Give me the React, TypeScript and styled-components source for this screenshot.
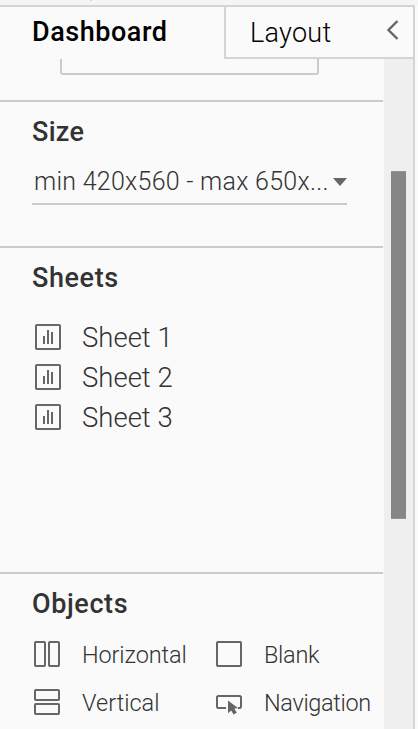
import React from "react";
import styled, { createGlobalStyle } from "styled-components";

const ink = "#333";
const iconGray = "#666";
const rule = "#cbcbcb";
const frame = "#d4d4d4";

const GlobalStyle = createGlobalStyle`
  *, *::before, *::after { box-sizing: border-box; }
  body {
    margin: 0;
    overflow: hidden;
    background: #fafafa;
    color: ${ink};
    font-family: Roboto, "Open Sans", sans-serif;
    font-weight: 300;
  }
  svg { display: block; flex: none; }
`;

const Page = styled.div`
  width: 418px;
  height: 729px;
  display: flex;
  flex-direction: column;
  overflow: hidden;
`;

const TopStrip = styled.div`
  flex: none;
  height: 5px;
  padding-left: 90px;
  background: #f5f5f5;

  &::before {
    content: "";
    display: block;
    width: 2px;
    height: 1px;
    background: #d8d8d8;
  }
`;

const Pane = styled.section`
  flex: 1;
  min-height: 0;
  width: 415px;
  display: flex;
  flex-direction: column;
  border-top: 2px solid ${frame};
  border-right: 2px solid ${frame};
`;

const TabBar = styled.nav`
  flex: none;
  display: flex;
  height: 52px;
  color: #000;
  font-size: 27px;
  line-height: 32px;
  white-space: nowrap;
`;

const ActiveTab = styled.div`
  width: 224px;
  padding: 9px 0 0 32px;
  font-weight: 500;
  letter-spacing: 0.55px;
`;

const InactiveTab = styled.div`
  flex: 1;
  display: flex;
  justify-content: space-between;
  padding: 10px 13px 0 24px;
  border-left: 2px solid ${frame};
  border-bottom: 2px solid ${frame};
  letter-spacing: 0.25px;

  svg { margin-top: 3px; }
`;

const Body = styled.div`
  flex: 1;
  min-height: 0;
  display: flex;
`;

const Content = styled.main`
  width: 383px;
  overflow: hidden;
`;

const ScrollTrack = styled.div`
  flex: 1;
  margin-left: 1px;
  padding: 112px 0 0 7px;
  background: #efefef;
`;

const ScrollThumb = styled.div`
  width: 15px;
  height: 348px;
  border: solid #959595;
  border-width: 1px 0;
  background: #868686;
`;

const Section = styled.section<{ $height: number }>`
  height: ${(p) => p.$height}px;
  padding-left: 32px;
  border-bottom: 2px solid ${rule};
`;

const Preview = styled.div`
  width: 259px;
  height: 16px;
  margin-left: 28px;
  border: 2px solid ${rule};
  border-top: 0;
  border-radius: 0 0 3px 3px;
`;

const Heading = styled.h2<{ $spacing?: number }>`
  margin: 0;
  padding-top: 14px;
  font-size: 27px;
  font-weight: 500;
  line-height: 32px;
  letter-spacing: ${(p) => p.$spacing ?? 0.6}px;
`;

const Select = styled.div`
  display: flex;
  justify-content: space-between;
  width: 315px;
  height: 41px;
  margin-top: 16px;
  padding: 2px 0 0 2px;
  border-bottom: 2px solid ${rule};
  font-size: 25px;
  line-height: 32px;
  letter-spacing: 0.27px;
  white-space: nowrap;

  svg { margin-top: 12px; }
`;

const SheetList = styled.ul`
  margin: 23px 0 0;
  padding: 0;
  list-style: none;
`;

const SheetRow = styled.li`
  display: flex;
  align-items: center;
  gap: 21px;
  height: 40px;
  padding-left: 3px;
  font-size: 27.5px;
`;

const ObjectGrid = styled.div`
  display: grid;
  grid-template-columns: 182px 1fr;
  grid-auto-rows: 48px;
  margin-top: 10px;
`;

const ObjectCell = styled.div`
  display: flex;
  align-items: center;
  gap: 22px;
  padding-left: 2px;
  font-size: 23.5px;
  line-height: 32px;
  letter-spacing: -0.1px;
  white-space: nowrap;
`;

const ObjectLabel = styled.span<{ $spacing?: number }>`
  margin-top: 1px;
  letter-spacing: ${(p) => p.$spacing ?? -0.12}px;
`;

const Icon = ({ children }: { children: React.ReactNode }) => (
  <svg width="26" height="26" fill="none" stroke={iconGray} strokeWidth="2">
    {children}
  </svg>
);

const SheetIcon = () => (
  <Icon>
    <rect x="1" y="1" width="24" height="24" rx="0.8" />
    <path d="M9 12v8M13 6v14M17 8v12" />
  </Icon>
);

const HorizontalIcon = () => (
  <Icon>
    <rect x="1" y="1" width="10" height="24" rx="0.8" />
    <rect x="15" y="1" width="10" height="24" rx="0.8" />
  </Icon>
);

const VerticalIcon = () => (
  <Icon>
    <rect x="1" y="1" width="24" height="10" rx="0.8" />
    <rect x="1" y="15" width="24" height="10" rx="0.8" />
  </Icon>
);

const BlankIcon = () => (
  <Icon>
    <rect x="1" y="1" width="24" height="24" rx="0.8" />
  </Icon>
);

const NavigationIcon = () => (
  <Icon>
    <path d="M10 19H2L1 18V8l1-1h22l1 1v10l-1 1h-2" />
    <path
      d="M12 11.5v12.8l3.2-2.8 2.3 4 3.3-1.8-2.4-4 3.6-.7z"
      fill={iconGray}
      stroke="none"
    />
  </Icon>
);

const sheets = ["Sheet 1", "Sheet 2", "Sheet 3"];

const objects = [
  { label: "Horizontal", Glyph: HorizontalIcon },
  { label: "Blank", Glyph: BlankIcon, spacing: -0.3 },
  { label: "Vertical", Glyph: VerticalIcon, spacing: 0 },
  { label: "Navigation", Glyph: NavigationIcon, spacing: -0.35 },
];

export default function App() {
  return (
    <Page>
      <GlobalStyle />
      <TopStrip />
      <Pane>
        <TabBar>
          <ActiveTab>Dashboard</ActiveTab>
          <InactiveTab>
            Layout
            <svg width="14" height="20" fill="none" stroke={iconGray} strokeWidth="2.4">
              <path d="M11.5 1 2.5 10l9 9" />
            </svg>
          </InactiveTab>
        </TabBar>
        <Body>
          <Content>
            <Section $height={43}>
              <Preview />
            </Section>
            <Section $height={146}>
              <Heading $spacing={0.3}>Size</Heading>
              <Select>
                min 420x560 - max 650x...
                <svg width="14" height="8">
                  <path d="M0 0h14L7 8z" fill={iconGray} />
                </svg>
              </Select>
            </Section>
            <Section $height={326}>
              <Heading>Sheets</Heading>
              <SheetList>
                {sheets.map((name) => (
                  <SheetRow key={name}>
                    <SheetIcon />
                    {name}
                  </SheetRow>
                ))}
              </SheetList>
            </Section>
            <Section $height={200}>
              <Heading $spacing={0.6}>Objects</Heading>
              <ObjectGrid>
                {objects.map(({ label, Glyph, spacing }) => (
                  <ObjectCell key={label}>
                    <Glyph />
                    <ObjectLabel $spacing={spacing}>{label}</ObjectLabel>
                  </ObjectCell>
                ))}
              </ObjectGrid>
            </Section>
          </Content>
          <ScrollTrack>
            <ScrollThumb />
          </ScrollTrack>
        </Body>
      </Pane>
    </Page>
  );
}
